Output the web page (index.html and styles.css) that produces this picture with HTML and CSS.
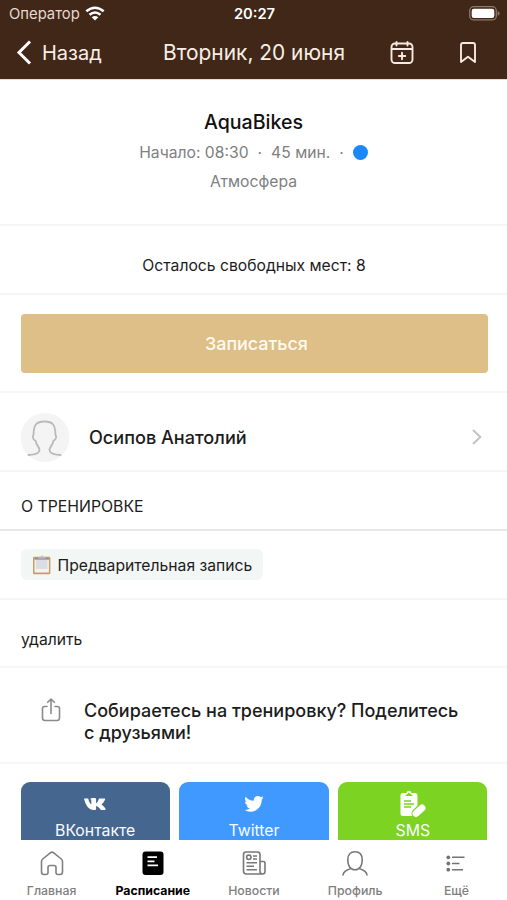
FILE: index.html
```html
<!DOCTYPE html>
<html lang="ru">
<head>
<meta charset="utf-8">
<title>AquaBikes</title>
<link rel="stylesheet" href="styles.css">
</head>
<body>
<div class="app">
  <header class="header">
    <div class="status">
      <div class="carrier"><span>Оператор</span>
        <svg width="20" height="16" viewBox="0 0 20 16" fill="none" stroke="#fff" stroke-width="2.5"><path d="M1.3 5.3Q10-1.9 18.7 5.3M4.5 8.8Q10 4.1 15.5 8.8"/><path d="M6.7 11.3Q10 8.5 13.3 11.3L10 14.6Z" fill="#fff" stroke="none"/></svg>
      </div>
      <span class="clock">20:27</span>
      <svg class="battery" width="31" height="15" viewBox="0 0 31 15"><rect x=".7" y=".7" width="26.6" height="13.2" rx="4" fill="none" stroke="#8c7a6e" stroke-width="1.3"/><rect x="2.7" y="2.7" width="22.6" height="9.2" rx="2.2" fill="#fff"/><path d="M28.6 5q2 .8 2 2.4t-2 2.4z" fill="#8c7a6e"/></svg>
    </div>
    <nav class="navbar">
      <a class="back"><svg width="16" height="25" viewBox="0 0 16 25" fill="none" stroke="#fff" stroke-width="3"><path d="M14 1.5 3 12.5l11 11"/></svg><span>Назад</span></a>
      <h1 class="date">Вторник, 20 июня</h1>
      <svg class="calendar" width="24" height="24" viewBox="0 0 24 24" fill="none" stroke="#f5e9e0" stroke-width="1.9" stroke-linecap="round"><rect x="1.5" y="2.500" width="21" height="19.500" rx="3.5"/><path d="M2 8h20M6.500 1v3.500M17.500 1v3.500M12 11.800v6.400M8.800 15h6.400"/></svg>
      <svg class="bookmark" width="18" height="22" viewBox="0 0 18 22" fill="none" stroke="#f5e9e0" stroke-width="1.9" stroke-linejoin="round"><path d="M2 3q0-2 2-2h10q2 0 2 2v17l-7-5.3L2 20z"/></svg>
    </nav>
  </header>

  <main class="content">
    <section class="intro">
      <h2 class="class-name">AquaBikes</h2>
      <div class="meta"><span class="start">Начало: 08:30</span><span class="sep">·</span><span class="length">45 мин.</span><span class="sep">·</span><i class="dot"></i></div>
      <div class="room"><span>Атмосфера</span></div>
    </section>
    <section class="seats"><span>Осталось свободных мест: 8</span></section>
    <section class="signup"><button class="signup-button"><span>Записаться</span></button></section>
    <section class="trainer">
      <svg class="avatar" width="50" height="50" viewBox="0 0 50 50"><circle cx="25" cy="25.500" r="24.5" fill="#f4f4f4"/><path d="M8.500 43c7-.3 11-1.500 11-5 0-3.200-3.300-4.500-4-9.300-2.600-1.200-3.300-4-2-6C13.700 13 16 9.500 24.500 9.500s10.800 3.500 11 13.200c1.300 2 .6 4.800-2 6-.7 4.800-4 6.100-4 9.300 0 3.500 4 4.700 11 5" fill="none" stroke="#bababa" stroke-width="1.8" stroke-linecap="round"/></svg>
      <span class="trainer-name">Осипов Анатолий</span>
      <svg class="chevron" width="10" height="16" viewBox="0 0 10 16" fill="none" stroke="#c3c3c5" stroke-width="2"><path d="m1 1 7.300 7L1 15"/></svg>
    </section>
    <h3 class="about"><span>О ТРЕНИРОВКЕ</span></h3>
    <section class="tags">
      <div class="tag"><svg width="20" height="20" viewBox="0 0 20 20"><rect x="1" y="1.800" width="17.400" height="17.400" rx="1.300" fill="#c99d62"/><path d="M2.500 3h14.400v14.500H2.500z" fill="#f1f2f5"/><path d="M4 5h11.500v9H4z" fill="#dcdde2"/><path d="M2.500 3h14.400v1.700H2.500z" fill="#8e9094"/><path d="M6 3.500q0-1.500 2.500-1.500Q8.800.5 10 .5T11.500 2Q14 2 14 3.500z" fill="#b9bdc2"/></svg><span>Предварительная запись</span></div>
    </section>
    <section class="description"><span>удалить</span></section>
    <section class="share">
      <svg class="share-icon" width="20" height="25" viewBox="0 0 20 25" fill="none" stroke="#8b8b8b" stroke-width="1.600" stroke-linecap="round" stroke-linejoin="round"><path d="M6 8.500H3.500q-2 0-2 2V20q0 2.500 2.500 2.500h12q2.500 0 2.500-2.500V10.500q0-2-2-2H14M10 15.500V1.500M6.700 4.300 10 1l3.300 3.300"/></svg>
      <p class="share-text"><span class="line1">Собираетесь на тренировку? Поделитесь</span><br><span class="line2">с друзьями!</span></p>
    </section>
    <section class="networks">
      <a class="network vk"><svg width="24" height="22" viewBox="0 0 24 22"><path d="M1 5.500h4.200c.8 3.500 2 5.200 3.100 5.800V7.300c0-.8-.5-1.100-1.100-1.400Q8 4.900 10 4.900h1.600q1.500 0 1.500 1.400v4.100q1.700-1.300 3-4.900H21.500q1 0 .6 1.100-.8 2.300-3.500 4.900 3.700 3.200 4 4.400.2 1-1 1H18q-2-2.800-4.900-4.100v3q0 1.200-1.200 1.200H10.500C6.200 17 2.500 12.500 1 5.500z" fill="#fff"/></svg><span>ВКонтакте</span></a>
      <a class="network twitter"><svg width="20" height="22" viewBox="0 0 24 26"><path d="M23.600 5.600a9.500 9.500 0 0 1-2.700.8 4.800 4.800 0 0 0 2.100-2.700 9.500 9.500 0 0 1-3 1.200 4.800 4.800 0 0 0-8.200 4.300A13.500 13.500 0 0 1 2 4.200a4.800 4.800 0 0 0 1.500 6.400 4.700 4.700 0 0 1-2.200-.6 4.800 4.800 0 0 0 3.800 4.700 4.800 4.800 0 0 1-2.100.1 4.800 4.800 0 0 0 4.400 3.300A9.600 9.600 0 0 1 .3 20a13.500 13.500 0 0 0 20.900-12 9.600 9.600 0 0 0 2.400-2.400z" fill="#fff"/></svg><span>Twitter</span></a>
      <a class="network sms"><svg width="28" height="28" viewBox="0 0 28 28"><path d="M4 3h3.500Q8 .8 10 .8T12.500 3H16q2.500 0 2.500 2.500v19q0 1.500-2.500 1.500H4q-2.500 0-2.500-2.500v-18Q1.500 3 4 3z" fill="#fff"/><path d="m6 6 4-3.500L14 6z" fill="#7dd321"/><path d="M5 11h7M5 14h10M5 17h7" stroke="#7dd321" stroke-width="1.600"/><path d="m17 23.500 6-6" stroke="#7dd321" stroke-width="9" stroke-linecap="round"/><path d="m17 23.500 6-5.500" stroke="#fff" stroke-width="7" stroke-linecap="round"/></svg><span>SMS</span></a>
    </section>
  </main>

  <footer class="tabbar">
    <a class="tab home"><svg width="26" height="26" viewBox="0 0 26 26" fill="none" stroke="#808080" stroke-width="1.600" stroke-linejoin="round"><path d="M2.500 11.500q0-1.500 1.200-2.500l7.600-6.200q1.700-1.300 3.400 0l7.600 6.200q1.200 1 1.200 2.500V22q0 2.500-2.500 2.500h-2q-2 0-2-2v-5q0-2-2-2h-4q-2 0-2 2v5q0 2-2 2H5q-2.500 0-2.500-2.500z"/></svg><span>Главная</span></a>
    <a class="tab schedule"><svg width="26" height="26" viewBox="0 0 26 26"><rect x="2.500" y="1.500" width="21" height="23.500" rx="3" fill="#000"/><path d="M7.500 7.200h9.500M7.500 11.300h7M7.500 15.400h10.500" stroke="#fff" stroke-width="1.700"/></svg><span>Расписание</span></a>
    <a class="tab news"><svg width="26" height="26" viewBox="0 0 26 26" fill="none" stroke="#777" stroke-width="1.600"><path d="M19 21.500V4.500q0-2.500-2.500-2.500H5Q2.500 2 2.500 4.500V21q0 3 3 3h16q2.500 0 2.500-2.500V13q0-1.500-1.500-1.500H19v10q0 2.500 2.500 2.500"/><circle cx="7.800" cy="7.300" r="2.200"/><path d="M12 6h4M12 9h4M5.500 12.800h10.500M5.500 16.300h7.500M5.500 19.800h10.500"/></svg><span>Новости</span></a>
    <a class="tab profile"><svg width="26" height="26" viewBox="0 0 26 26" fill="none" stroke="#777" stroke-width="1.600" stroke-linecap="round"><path d="M13 1.700c4.800 0 7.200 3.200 7.200 8 0 3.800-1.200 7.300-3.700 9q-3.500 2.200-7 0c-2.500-1.700-3.700-5.200-3.700-9 0-4.800 2.400-8 7.200-8zM8.800 18.500C5 20 1.500 21 1 25M17.200 18.500c3.800 1.500 7.300 2.500 7.800 6.500"/></svg><span>Профиль</span></a>
    <a class="tab more"><svg width="26" height="26" viewBox="0 0 26 26" fill="#737373"><circle cx="5.300" cy="7.300" r="1.900"/><circle cx="5.300" cy="13.500" r="1.900"/><circle cx="5.300" cy="19.700" r="1.900"/><path d="M9 6.500h12.500v1.600H9zM9 12.700h7.500v1.600H9zM9 18.900h11v1.600H9z"/></svg><span>Ещё</span></a>
  </footer>
</div>
</body>
</html>
```

FILE: styles.css
```css
* { box-sizing: border-box; }
body { margin: 0; background: #fff; color: #1c1c1c; font-family: Inter, "Noto Sans", sans-serif; }
h1, h2, h3, p { margin: 0; font-weight: 400; }
svg { display: block; flex: none; }
.app { height: 900px; display: flex; flex-direction: column; overflow: hidden; }
.header { height: 79px; flex: none; background: #402717; color: #f8eee6; }
.status { height: 27px; display: grid; grid-template-columns: 1fr auto 1fr; align-items: center; padding: 0 7px 0 9px; }
.carrier { display: flex; align-items: center; gap: 5px; font-size: 14.8px; color: #e5d9d0; }
.clock { font-size: 14.7px; font-weight: 600; color: #fff; }
.battery { justify-self: end; }
.navbar { height: 52px; display: flex; align-items: center; padding: 0 30px 1px 16px; }
.back { width: 147px; display: flex; align-items: center; gap: 10px; font-size: 20px; }
.date { width: 227px; font-size: 20.9px; white-space: nowrap; }
.bookmark { margin-left: auto; }
.content { flex: 1; min-height: 0; overflow: hidden; border-top: 1px solid #e4ddd2; }
.content > * { border-bottom: 2px solid #f6f6f6; white-space: nowrap; }
.intro { height: 146px; display: flex; flex-direction: column; align-items: center; padding-top: 28px; color: #808080; font-size: 15.7px; }
.class-name { color: #111; font-size: 19.6px; font-weight: 500; line-height: 28px; }
.meta { height: 32px; display: flex; align-items: center; }
.sep { width: 22.5px; text-align: center; }
.dot { width: 15px; height: 15px; border-radius: 50%; background: #1a88fb; }
.room { line-height: 28px; }
.seats { height: 69px; display: flex; align-items: center; justify-content: center; font-size: 15.7px; padding: 11px 0 0 1px; }
.signup { height: 98px; padding: 19px 19.5px 0 20.5px; }
.signup-button { width: 100%; height: 59px; padding: 0 0 0 5px; border: 0; border-radius: 4px; background: #debf87; color: #fffaf0; font: 500 17.9px Inter, sans-serif; }
.trainer { height: 79px; display: flex; align-items: center; padding: 11px 25px 0 20px; }
.trainer-name { margin-left: 19px; font-size: 18.1px; font-weight: 500; }
.chevron { margin-left: auto; }
.content .about { height: 59px; display: flex; align-items: center; padding: 11px 21px 0; font-size: 15.8px; border-color: #e8e8e8; }
.tags { height: 69px; padding: 18px 20.5px 0; }
.tag { width: 242px; height: 31px; display: flex; align-items: center; gap: 6px; padding: 1px 0 0 11px; border-radius: 6px; background: #f2f6f5; font-size: 15.7px; }
.description { height: 68px; display: flex; align-items: center; padding: 12px 21px 0; font-size: 15.7px; }
.share { height: 96px; display: flex; padding: 30px 20px 0 41px; }
.share-text { margin-left: 23px; padding-top: 2px; font-size: 18px; font-weight: 500; line-height: 22px; }
.content .networks { height: 88px; display: grid; grid-template-columns: repeat(3, 1fr); gap: 9.5px; padding: 18px 19.5px 0 20.5px; border: 0; }
.network { height: 80px; padding-top: 7px; display: flex; flex-direction: column; align-items: center; border-radius: 9px; color: #f8fbff; font-size: 15.8px; }
.network svg { height: 30px; }
.network span { line-height: 24px; }
.vk { background: #45668e; }
.twitter { background: #4099ff; }
.sms { background: #7dd321; }
.tabbar { height: 60px; flex: none; display: grid; grid-template-columns: repeat(5, 1fr); background: #fff; padding: 10px 0 0 1px; }
.tab { display: flex; flex-direction: column; align-items: center; color: #808080; font-size: 12.3px; font-weight: 500; }
.tab span { margin-top: 8px; line-height: 14px; }
.schedule { color: #000; font-weight: 700; }
```
